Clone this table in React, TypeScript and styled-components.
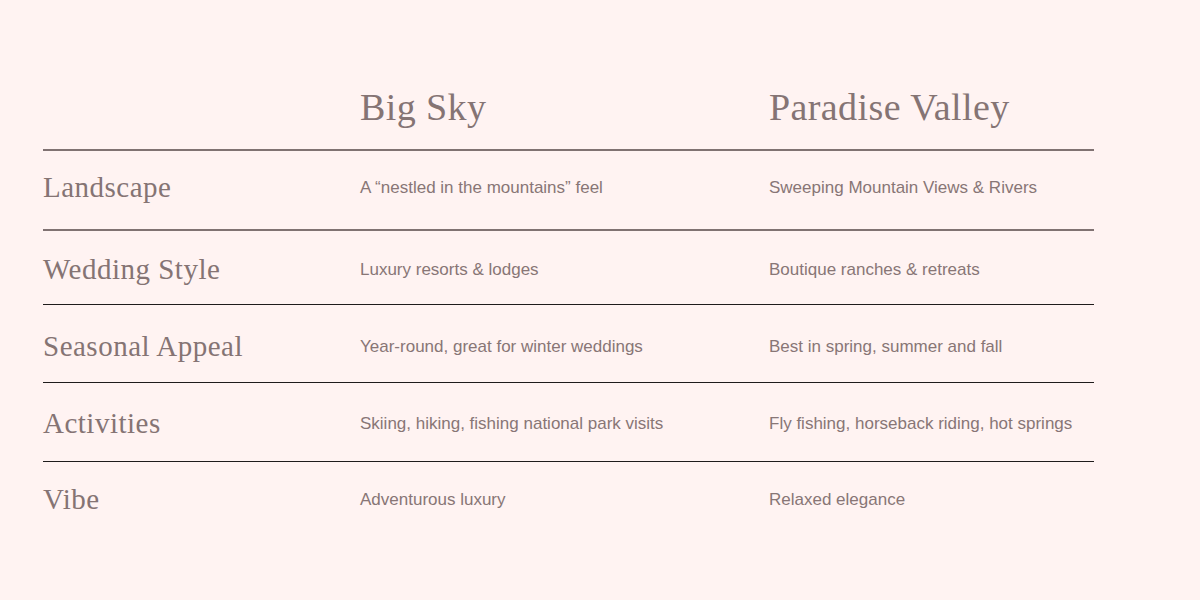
import React from 'react';
import styled, { createGlobalStyle } from 'styled-components';

const GlobalStyle = createGlobalStyle`
    html, body {
        margin: 0;
        padding: 0;
        background: #fff3f2;
    }
`;

const Page = styled.div`
    width: 1200px;
    height: 600px;
    background: #fff3f2;
    padding-left: 43px;
    box-sizing: border-box;
    overflow: hidden;
`;

const Table = styled.div`
    width: 1051px;
`;

const HeaderRow = styled.div`
    display: grid;
    grid-template-columns: 317px 409px 1fr;
    align-items: start;
    padding-top: 84px;
    height: 151px;
    box-sizing: border-box;
    border-bottom: 2px solid #807272;
`;

const Heading = styled.h2`
    margin: 0;
    font-family: "Liberation Serif", "DejaVu Serif", serif;
    font-weight: 400;
    font-size: 38px;
    line-height: 46px;
    letter-spacing: 0.4px;
    color: #857474;
    white-space: nowrap;
`;

const Row = styled.div<{ $height: number; $top: number; $line?: 'soft' | 'dark' }>`
    display: grid;
    grid-template-columns: 317px 409px 1fr;
    align-items: center;
    align-content: start;
    height: ${props => props.$height}px;
    padding-top: ${props => props.$top}px;
    box-sizing: border-box;
    border-bottom: ${props =>
        props.$line === 'soft' ? '2px solid #807272'
        : props.$line === 'dark' ? '1px solid #1f1c1c'
        : 'none'};
`;

const Label = styled.div`
    height: 36px;
    display: flex;
    align-items: center;
    font-family: "Liberation Serif", "DejaVu Serif", serif;
    font-size: 29px;
    letter-spacing: 0.5px;
    color: #857474;
    white-space: nowrap;
`;

const Cell = styled.div`
    height: 36px;
    padding-top: 1px;
    box-sizing: border-box;
    display: flex;
    align-items: center;
    font-family: "Liberation Sans", Arial, sans-serif;
    font-size: 17px;
    color: #887676;
    white-space: nowrap;
`;

type RowData = {
    label: string;
    bigSky: string;
    paradise: string;
    height: number;
    top: number;
    line?: 'soft' | 'dark';
};

const rows: RowData[] = [
    { label: 'Landscape', bigSky: 'A \u201cnestled in the mountains\u201d feel', paradise: 'Sweeping Mountain Views & Rivers', height: 80, top: 18, line: 'soft' },
    { label: 'Wedding Style', bigSky: 'Luxury resorts & lodges', paradise: 'Boutique ranches & retreats', height: 74, top: 20, line: 'dark' },
    { label: 'Seasonal Appeal', bigSky: 'Year-round, great for winter weddings', paradise: 'Best in spring, summer and fall', height: 78, top: 23, line: 'dark' },
    { label: 'Activities', bigSky: 'Skiing, hiking, fishing national park visits', paradise: 'Fly fishing, horseback riding, hot springs', height: 79, top: 22, line: 'dark' },
    { label: 'Vibe', bigSky: 'Adventurous luxury', paradise: 'Relaxed elegance', height: 76, top: 19 },
];

const App: React.FC = () => {
    return (
        <>
            <GlobalStyle />
            <Page>
                <Table>
                    <HeaderRow>
                        <div />
                        <Heading>Big Sky</Heading>
                        <Heading>Paradise Valley</Heading>
                    </HeaderRow>
                    {rows.map(row => (
                        <Row
                            key={`row-${row.label}`}
                            $height={row.height}
                            $top={row.top}
                            $line={row.line}
                        >
                            <Label>{row.label}</Label>
                            <Cell>{row.bigSky}</Cell>
                            <Cell>{row.paradise}</Cell>
                        </Row>
                    ))}
                </Table>
            </Page>
        </>
    );
};

export default App;
